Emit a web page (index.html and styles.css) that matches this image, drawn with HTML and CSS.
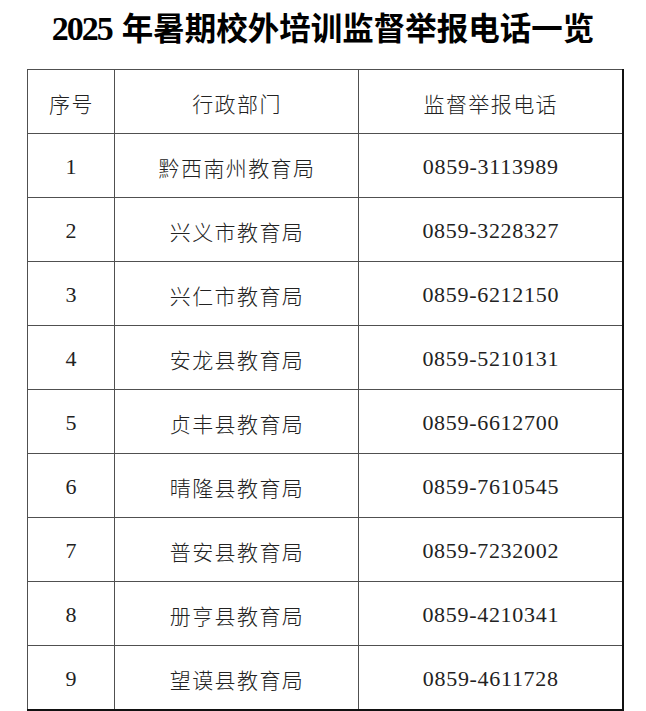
FILE: index.html
```html
<!DOCTYPE html>
<html lang="zh-CN">
<head>
<meta charset="utf-8">
<title>2025年暑期校外培训监督举报电话一览</title>
<link rel="stylesheet" href="styles.css">
</head>
<body>
<h1 class="title"><span class="title-num">2025</span> 年暑期校外培训监督举报电话一览</h1>
<table class="list">
  <colgroup>
    <col class="c-no">
    <col class="c-dept">
    <col class="c-tel">
  </colgroup>
  <thead>
    <tr><th>序号</th><th>行政部门</th><th>监督举报电话</th></tr>
  </thead>
  <tbody>
    <tr><td class="no">1</td><td>黔西南州教育局</td><td class="tel">0859-3113989</td></tr>
    <tr><td class="no">2</td><td>兴义市教育局</td><td class="tel">0859-3228327</td></tr>
    <tr><td class="no">3</td><td>兴仁市教育局</td><td class="tel">0859-6212150</td></tr>
    <tr><td class="no">4</td><td>安龙县教育局</td><td class="tel">0859-5210131</td></tr>
    <tr><td class="no">5</td><td>贞丰县教育局</td><td class="tel">0859-6612700</td></tr>
    <tr><td class="no">6</td><td>晴隆县教育局</td><td class="tel">0859-7610545</td></tr>
    <tr><td class="no">7</td><td>普安县教育局</td><td class="tel">0859-7232002</td></tr>
    <tr><td class="no">8</td><td>册亨县教育局</td><td class="tel">0859-4210341</td></tr>
    <tr><td class="no">9</td><td>望谟县教育局</td><td class="tel">0859-4611728</td></tr>
  </tbody>
</table>
</body>
</html>
```
FILE: styles.css
```css
html, body {
  margin: 0;
  padding: 0;
  background: #fff;
}
body {
  width: 646px;
  height: 711px;
  overflow: hidden;
  color: #1a1a1a;
  font-family: "Liberation Serif", "Noto Sans CJK SC", serif;
}
.title {
  margin: 0;
  height: 69px;
  line-height: 58px;
  text-align: center;
  font-size: 31.5px;
  font-weight: 700;
  color: #000;
  letter-spacing: 0;
  font-family: "Liberation Serif", "Noto Sans CJK SC", serif;
}
.title-num {
  font-size: 34px;
  letter-spacing: -2px;
  margin-right: 2px;
}
.list {
  margin-left: 27px;
  width: 595px;
  border-collapse: collapse;
  table-layout: fixed;
  border-right: 2px solid #111;
  border-bottom: 2px solid #111;
}
.c-no { width: 87px; }
.c-dept { width: 244px; }
.c-tel { width: 264px; }
.list th,
.list td {
  height: 60px;
  padding: 3px 0 0 1px;
  border: 1px solid #505050;
  text-align: center;
  vertical-align: middle;
  font-size: 21px;
  font-weight: 300;
  letter-spacing: 1.4px;
  color: #222;
}
.list th {
  font-weight: 300;
}
.list td.no {
  font-size: 22px;
  letter-spacing: 0;
  padding-left: 0;
}
.list td.tel {
  font-size: 22px;
  letter-spacing: 0.7px;
}
```
